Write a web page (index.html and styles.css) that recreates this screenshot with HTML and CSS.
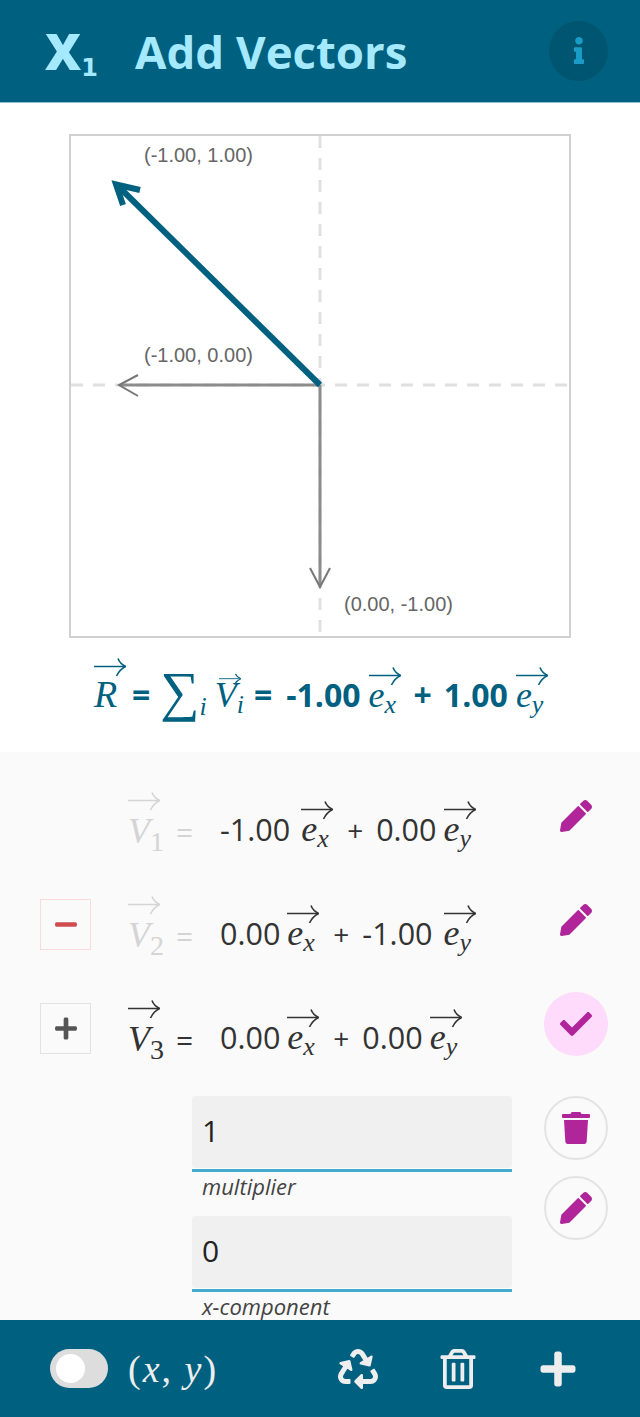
FILE: index.html
```html
<!DOCTYPE html>
<html lang="en">
<head>
    <meta charset="UTF-8">
    <meta name="viewport" content="width=device-width, initial-scale=1.0">
    <title>Add Vectors</title>
    <link rel="stylesheet" href="styles.css">
</head>
<body>
<svg class="defs" width="0" height="0">
    <symbol id="arrow" viewBox="0 0 32 20" preserveAspectRatio="none">
        <path d="M0 9.5H30" fill="none" stroke="currentColor" stroke-width="1.5"/>
        <path d="M24 1.5Q26 7 32 9.5Q26 12 22.5 19" fill="none" stroke="currentColor" stroke-width="1.6"/>
    </symbol>
    <symbol id="pencil" viewBox="0 0 512 512">
        <path d="M497.9 142.1l-46.1 46.1c-4.7 4.7-12.3 4.7-17 0l-111-111c-4.7-4.7-4.7-12.3 0-17l46.1-46.1c18.7-18.7 49.1-18.7 67.9 0l60.1 60.1c18.8 18.7 18.8 49.1 0 67.9zM284.2 99.8L21.6 362.4.4 483.9c-2.9 16.4 11.4 30.6 27.8 27.8l121.5-21.3 262.6-262.6c4.7-4.7 4.7-12.3 0-17l-111-111c-4.8-4.7-12.4-4.7-17.1 0z"/>
    </symbol>
    <symbol id="plus" viewBox="0 0 448 512">
        <path d="M416 208H272V64c0-17.67-14.33-32-32-32h-32c-17.67 0-32 14.33-32 32v144H32c-17.67 0-32 14.33-32 32v32c0 17.67 14.33 32 32 32h144v144c0 17.67 14.33 32 32 32h32c17.67 0 32-14.33 32-32V304h144c17.67 0 32-14.33 32-32v-32c0-17.67-14.33-32-32-32z"/>
    </symbol>
</svg>

<div id="app">
    <header class="top-bar">
        <div class="logo">X<span class="logo-sub">1</span></div>
        <h1 class="title">Add Vectors</h1>
        <button class="info-btn">
            <svg class="icon-info" viewBox="0 0 192 512"><path d="M20 424.229h20V279.771H20c-11.046 0-20-8.954-20-20V212c0-11.046 8.954-20 20-20h112c11.046 0 20 8.954 20 20v212.229h20c11.046 0 20 8.954 20 20V492c0 11.046-8.954 20-20 20H20c-11.046 0-20-8.954-20-20v-47.771c0-11.046 8.954-20 20-20zM96 0C56.235 0 24 32.235 24 72s32.235 72 72 72 72-32.235 72-72S135.764 0 96 0z"/></svg>
        </button>
    </header>

    <section class="plot-area">
        <div class="chart">
            <svg class="chart-svg" viewBox="-249 -249 498 500">
                <path class="axis" d="M0 -249V251M-249 0H249"/>
                <path class="vec-line" d="M0 0H-199M0 0V200"/>
                <path class="vec-head" d="M-182 -10L-201 0L-182 11M-10 183L0 202L10 183"/>
                <path class="result-line" d="M0 0L-200 -197"/>
                <path class="result-head" d="M-180 -195L-204 -200.5L-197 -180" />
                <text class="point-label" x="-176" y="-223">(-1.00, 1.00)</text>
                <text class="point-label" x="-176" y="-23">(-1.00, 0.00)</text>
                <text class="point-label" x="24" y="226">(0.00, -1.00)</text>
            </svg>
        </div>
        <div class="result-eq">
            <span class="vec vec-r"><svg><use href="#arrow"/></svg><i>R</i></span>
            <b class="eq-sign">=</b>
            <span class="sum">∑</span><i class="sum-i">i</i>
            <span class="vec vec-small"><svg><use href="#arrow"/></svg><i>V</i><sub>i</sub></span>
            <b class="eq-sign eq-after">=</b>
            <b class="num">-1.00</b>
            <span class="vec"><svg><use href="#arrow"/></svg><i>e</i><sub>x</sub></span>
            <b class="eq-plus">+</b>
            <b class="num">1.00</b>
            <span class="vec"><svg><use href="#arrow"/></svg><i>e</i><sub>y</sub></span>
        </div>
    </section>

    <main class="vector-list">
        <div class="vector-row">
            <div class="toggle-slot"></div>
            <div class="vec-name off"><span class="vec"><svg><use href="#arrow"/></svg><i>V</i><sub class="up">1</sub></span><span class="eq">=</span></div>
            <div class="expr">
                <span class="val neg">-1.00</span>
                <span class="vec"><svg><use href="#arrow"/></svg><i>e</i><sub>x</sub></span>
                <span class="plus">+</span>
                <span class="val">0.00</span>
                <span class="vec"><svg><use href="#arrow"/></svg><i>e</i><sub>y</sub></span>
            </div>
            <button class="row-action"><svg class="icon-edit"><use href="#pencil"/></svg></button>
        </div>

        <div class="vector-row">
            <div class="toggle-slot"><button class="toggle toggle-remove"><svg viewBox="0 0 448 512"><path d="M416 208H32c-17.67 0-32 14.33-32 32v32c0 17.67 14.33 32 32 32h384c17.67 0 32-14.33 32-32v-32c0-17.67-14.33-32-32-32z"/></svg></button></div>
            <div class="vec-name off"><span class="vec"><svg><use href="#arrow"/></svg><i>V</i><sub class="up">2</sub></span><span class="eq">=</span></div>
            <div class="expr">
                <span class="val">0.00</span>
                <span class="vec"><svg><use href="#arrow"/></svg><i>e</i><sub>x</sub></span>
                <span class="plus">+</span>
                <span class="val neg">-1.00</span>
                <span class="vec"><svg><use href="#arrow"/></svg><i>e</i><sub>y</sub></span>
            </div>
            <button class="row-action"><svg class="icon-edit"><use href="#pencil"/></svg></button>
        </div>

        <div class="vector-row">
            <div class="toggle-slot"><button class="toggle toggle-add"><svg><use href="#plus"/></svg></button></div>
            <div class="vec-name"><span class="vec"><svg><use href="#arrow"/></svg><i>V</i><sub class="up">3</sub></span><span class="eq">=</span></div>
            <div class="expr">
                <span class="val">0.00</span>
                <span class="vec"><svg><use href="#arrow"/></svg><i>e</i><sub>x</sub></span>
                <span class="plus">+</span>
                <span class="val">0.00</span>
                <span class="vec"><svg><use href="#arrow"/></svg><i>e</i><sub>y</sub></span>
            </div>
            <button class="row-action active">
                <svg class="icon-check" viewBox="0 0 512 512"><path d="M173.898 439.404l-166.4-166.4c-9.997-9.997-9.997-26.206 0-36.204l36.203-36.204c9.997-9.998 26.207-9.998 36.204 0L192 312.69 432.095 72.596c9.997-9.997 26.207-9.997 36.204 0l36.203 36.204c9.997 9.997 9.997 26.206 0 36.204l-294.4 294.401c-9.998 9.997-26.207 9.997-36.204-.001z"/></svg>
            </button>
        </div>

        <div class="edit-panel">
            <form class="edit-fields">
                <div class="field">
                    <div class="input-wrap"><input type="text" value="1"></div>
                    <label>multiplier</label>
                </div>
                <div class="field">
                    <div class="input-wrap"><input type="text" value="0"></div>
                    <label>x-component</label>
                </div>
            </form>
            <div class="edit-actions">
                <button class="circle-btn">
                    <svg class="icon-trash" viewBox="0 0 448 512"><path d="M432 32H312l-9.4-18.7A24 24 0 0 0 281.1 0H166.8a23.72 23.72 0 0 0-21.4 13.3L136 32H16A16 16 0 0 0 0 48v32a16 16 0 0 0 16 16h416a16 16 0 0 0 16-16V48a16 16 0 0 0-16-16zM53.2 467a48 48 0 0 0 47.9 45h245.8a48 48 0 0 0 47.9-45L416 128H32z"/></svg>
                </button>
                <button class="circle-btn"><svg class="icon-edit"><use href="#pencil"/></svg></button>
            </div>
        </div>
    </main>

    <footer class="bottom-bar">
        <div class="switch"><span class="knob"></span></div>
        <div class="coord-mode">(<i>x</i>, <i>y</i>)</div>
        <div class="bottom-actions">
            <button class="bottom-btn">
                <svg viewBox="0 0 512 512"><path d="M184.561 261.903c3.232 13.997-12.123 24.635-24.068 17.168l-40.736-25.455-50.867 81.402C55.606 356.273 70.96 384 96.012 384H148c6.627 0 12 5.373 12 12v40c0 6.627-5.373 12-12 12H96.115c-75.334 0-121.302-83.048-81.408-146.88l50.822-81.388-40.725-25.448c-12.081-7.547-8.966-25.961 4.879-29.158l110.237-25.45c8.611-1.988 17.201 3.381 19.189 11.99l25.452 110.237zm98.561-182.915l41.289 66.076-40.74 25.457c-12.051 7.528-9 25.953 4.879 29.158l110.237 25.45c8.672 1.999 17.215-3.438 19.189-11.99l25.45-110.237c3.197-13.844-11.99-24.719-24.068-17.168l-40.687 25.424-41.263-66.082c-37.521-60.033-125.209-60.171-162.816 0l-17.963 28.766c-3.51 5.62-1.8 13.021 3.82 16.533l33.919 21.195c5.62 3.512 13.024 1.803 16.536-3.817l17.961-28.743c12.712-20.341 41.973-19.676 54.257-.022zM497.288 301.12l-27.515-44.065c-3.511-5.623-10.916-7.334-16.538-3.821l-33.861 21.159c-5.62 3.512-7.33 10.915-3.818 16.536l27.564 44.112c13.257 21.211-2.057 48.96-27.136 48.96H320V336.02c0-14.213-17.242-21.383-27.313-11.313l-80 79.981c-6.249 6.248-6.249 16.379 0 22.627l80 79.989C302.689 517.308 320 510.3 320 495.989V448h95.88c75.274 0 121.335-82.997 81.408-146.88z"/></svg>
            </button>
            <button class="bottom-btn">
                <svg viewBox="0 0 448 512"><path d="M268 416h24a12 12 0 0 0 12-12V188a12 12 0 0 0-12-12h-24a12 12 0 0 0-12 12v216a12 12 0 0 0 12 12zM432 80h-82.41l-34-56.7A48 48 0 0 0 274.41 0H173.59a48 48 0 0 0-41.16 23.3L98.41 80H16A16 16 0 0 0 0 96v16a16 16 0 0 0 16 16h16v336a48 48 0 0 0 48 48h288a48 48 0 0 0 48-48V128h16a16 16 0 0 0 16-16V96a16 16 0 0 0-16-16zM171.84 50.91A6 6 0 0 1 177 48h94a6 6 0 0 1 5.15 2.91L293.61 80H154.39zM368 464H80V128h288zm-212-48h24a12 12 0 0 0 12-12V188a12 12 0 0 0-12-12h-24a12 12 0 0 0-12 12v216a12 12 0 0 0 12 12z"/></svg>
            </button>
            <button class="bottom-btn"><svg><use href="#plus"/></svg></button>
        </div>
    </footer>
</div>
</body>
</html>
```

FILE: styles.css
```css
* {
    box-sizing: border-box;
}

body {
    font-family: 'Open Sans', sans-serif;
    background-color: #fff;
    margin: 0;
    padding: 0;
}

button {
    background: none;
    border: none;
    padding: 0;
    display: flex;
    justify-content: center;
    align-items: center;
    cursor: pointer;
}

.defs {
    position: absolute;
}

#app {
    height: 1417px;
    display: flex;
    flex-direction: column;
    overflow: hidden;
}

/* header */
.top-bar {
    height: 103px;
    flex-shrink: 0;
    background-color: #006080;
    border-bottom: 1px solid #8fc0cf;
    color: #a5e9ff;
    display: flex;
    align-items: center;
    padding: 0 32px 1px 45px;
}

.logo {
    width: 90px;
    font-size: 50px;
    font-weight: 800;
    line-height: 1;
    display: flex;
    align-items: baseline;
}

.logo-sub {
    font-size: 24px;
    font-family: 'DejaVu Sans', sans-serif;
    font-weight: 700;
    transform: translateY(6px);
}

.title {
    margin: 0;
    padding-top: 2px;
    font-size: 45.6px;
    font-weight: 700;
    flex: 1;
    line-height: 1;
}

.info-btn {
    width: 59px;
    height: 60px;
    border-radius: 50%;
    background-color: #005570;
}

.icon-info {
    width: 12px;
    height: 27px;
    fill: #1a9cc8;
}

/* chart */
.plot-area {
    height: 649px;
    flex-shrink: 0;
    padding-top: 31px;
    color: #006080;
}

.chart {
    width: 502px;
    height: 504px;
    margin-left: 69px;
    border: 2px solid #d0d0d0;
}

.chart-svg {
    display: block;
    width: 100%;
    height: 100%;
}

.axis {
    fill: none;
    stroke: #e0e0e0;
    stroke-width: 3;
    stroke-dasharray: 12 10;
}

.vec-line {
    fill: none;
    stroke: #8c8c8c;
    stroke-width: 3;
}

.vec-head {
    fill: none;
    stroke: #777;
    stroke-width: 2;
}

.result-line {
    fill: none;
    stroke: #006080;
    stroke-width: 6;
}

.result-head {
    fill: none;
    stroke: #006080;
    stroke-width: 6;
}

.point-label {
    font-family: 'Liberation Sans', sans-serif;
    font-size: 20px;
    fill: #666;
}

.result-eq {
    margin-top: 19px;
    padding-left: 94px;
    display: flex;
    align-items: baseline;
    font-family: 'Liberation Serif', serif;
    font-size: 36px;
}

.result-eq b {
    font-family: 'Open Sans', sans-serif;
    font-weight: 700;
    font-size: 32px;
}

.result-eq .vec svg {
    margin-bottom: -9px;
}

.result-eq .vec-r svg {
    margin-bottom: -2px;
}

.result-eq .vec-small svg {
    width: 22px;
    height: 12px;
    margin: 0 0 -8px 4px;
}

.vec-r {
    font-size: 38px;
}

.eq-sign {
    margin: 0 10px 0 6px;
}

.eq-sign.eq-after {
    margin: 0 14px 0 10px;
}

.eq-plus {
    margin: 0 12px 0 13px;
}

.num {
    margin-right: 8px;
}

.sum {
    font-size: 55px;
    line-height: 0.6;
    transform: translateY(3px);
}

.sum-i {
    font-size: 26px;
    margin-right: 8px;
    transform: translateY(8px);
}

/* math bits */
.vec {
    display: inline-block;
    font-family: 'Liberation Serif', serif;
    white-space: nowrap;
    line-height: 1;
}

.vec svg {
    display: block;
    width: 32px;
    height: 20px;
    margin-bottom: -9px;
}

.vec sub {
    font-size: 0.72em;
    font-style: italic;
    line-height: 0;
    vertical-align: -0.22em;
}

.vec sub.up {
    font-style: normal;
    font-size: 0.78em;
    vertical-align: -0.28em;
}

/* list */
.vector-list {
    flex: 1;
    min-height: 0;
    overflow: hidden;
    background-color: #fafafa;
    padding-top: 38px;
    color: #333;
}

.vector-row {
    height: 104px;
    padding: 0 32px 0 40px;
    display: flex;
    align-items: flex-start;
}

.toggle-slot {
    width: 88px;
    flex-shrink: 0;
}

.toggle {
    width: 51px;
    height: 51px;
    margin-top: 5px;
}

.toggle svg {
    width: 22px;
    height: 25px;
}

.toggle-remove {
    border: 1px solid #fddada;
    fill: #cf4c50;
}

.toggle-add {
    border: 1px solid #e2e2e2;
    fill: #555;
}

.vec-name {
    width: 92px;
    flex-shrink: 0;
    display: flex;
    align-items: baseline;
    font-family: 'Liberation Serif', serif;
    font-size: 36px;
    padding-top: 1px;
}

.vec-name .vec {
    width: 48px;
}

.vec-name .vec svg {
    margin-bottom: 2px;
}

.vec-name .eq {
    font-family: 'Open Sans', sans-serif;
    font-size: 30px;
}

.vec-name.off {
    color: #d4d4d4;
}

.expr {
    flex: 1;
    display: flex;
    align-items: baseline;
    font-size: 30.5px;
    font-family: 'Liberation Serif', serif;
    padding-top: 10px;
}

.expr .vec {
    font-size: 36px;
}

.expr .val {
    font-family: 'Open Sans', sans-serif;
    margin-right: 7px;
}

.expr .val.neg {
    margin-right: 11px;
}

.expr .plus {
    font-family: 'Open Sans', sans-serif;
    font-size: 28px;
    margin: 0 13px 0 14px;
}

.row-action {
    width: 64px;
    height: 64px;
    border-radius: 50%;
    flex-shrink: 0;
    margin-top: -6px;
}

.row-action.active {
    background-color: #fedafb;
}

.icon-edit {
    width: 32px;
    height: 32px;
    fill: #b0269a;
}

.icon-check {
    width: 32px;
    height: 32px;
    fill: #b0269a;
}

/* editing form */
.edit-panel {
    display: flex;
    align-items: flex-start;
    padding: 0 32px 0 192px;
    margin-top: -6px;
}

.edit-fields {
    width: 320px;
    margin-right: 32px;
    flex-shrink: 0;
}

.field {
    height: 120px;
}

.input-wrap {
    padding-bottom: 1px;
    border-bottom: 3px solid #45aacb;
}

.field input {
    display: block;
    width: 100%;
    height: 72px;
    background-color: #f0f0f0;
    border: none;
    border-radius: 4px;
    padding: 0 10px 4px;
    font-family: 'Open Sans', sans-serif;
    font-size: 30px;
    color: #222;
    outline: none;
}

.field label {
    display: block;
    margin: 1px 0 0 10px;
    font-size: 22px;
    font-style: italic;
    color: #444;
    line-height: 27px;
}

.edit-actions {
    display: flex;
    flex-direction: column;
    gap: 16px;
}

.circle-btn {
    width: 64px;
    height: 64px;
    border: 2px solid #e4e4e4;
    border-radius: 50%;
}

.icon-trash {
    width: 28px;
    height: 32px;
    fill: #b0269a;
}

/* footer */
.bottom-bar {
    height: 97px;
    flex-shrink: 0;
    background-color: #006080;
    display: flex;
    align-items: center;
    padding: 0 62px 0 50px;
    color: #eee;
}

.switch {
    width: 58px;
    height: 39px;
    border-radius: 20px;
    background-color: #ddd;
    padding: 5px 6px;
}

.knob {
    display: block;
    width: 29px;
    height: 29px;
    border-radius: 50%;
    background-color: #fff;
}

.coord-mode {
    margin-left: 20px;
    font-family: 'Liberation Serif', serif;
    font-size: 38px;
    letter-spacing: 2px;
    flex: 1;
}

.bottom-actions {
    display: flex;
    gap: 60px;
}

.bottom-btn {
    width: 40px;
    height: 40px;
    fill: #eee;
}

.bottom-btn svg {
    width: 40px;
    height: 40px;
}
```
